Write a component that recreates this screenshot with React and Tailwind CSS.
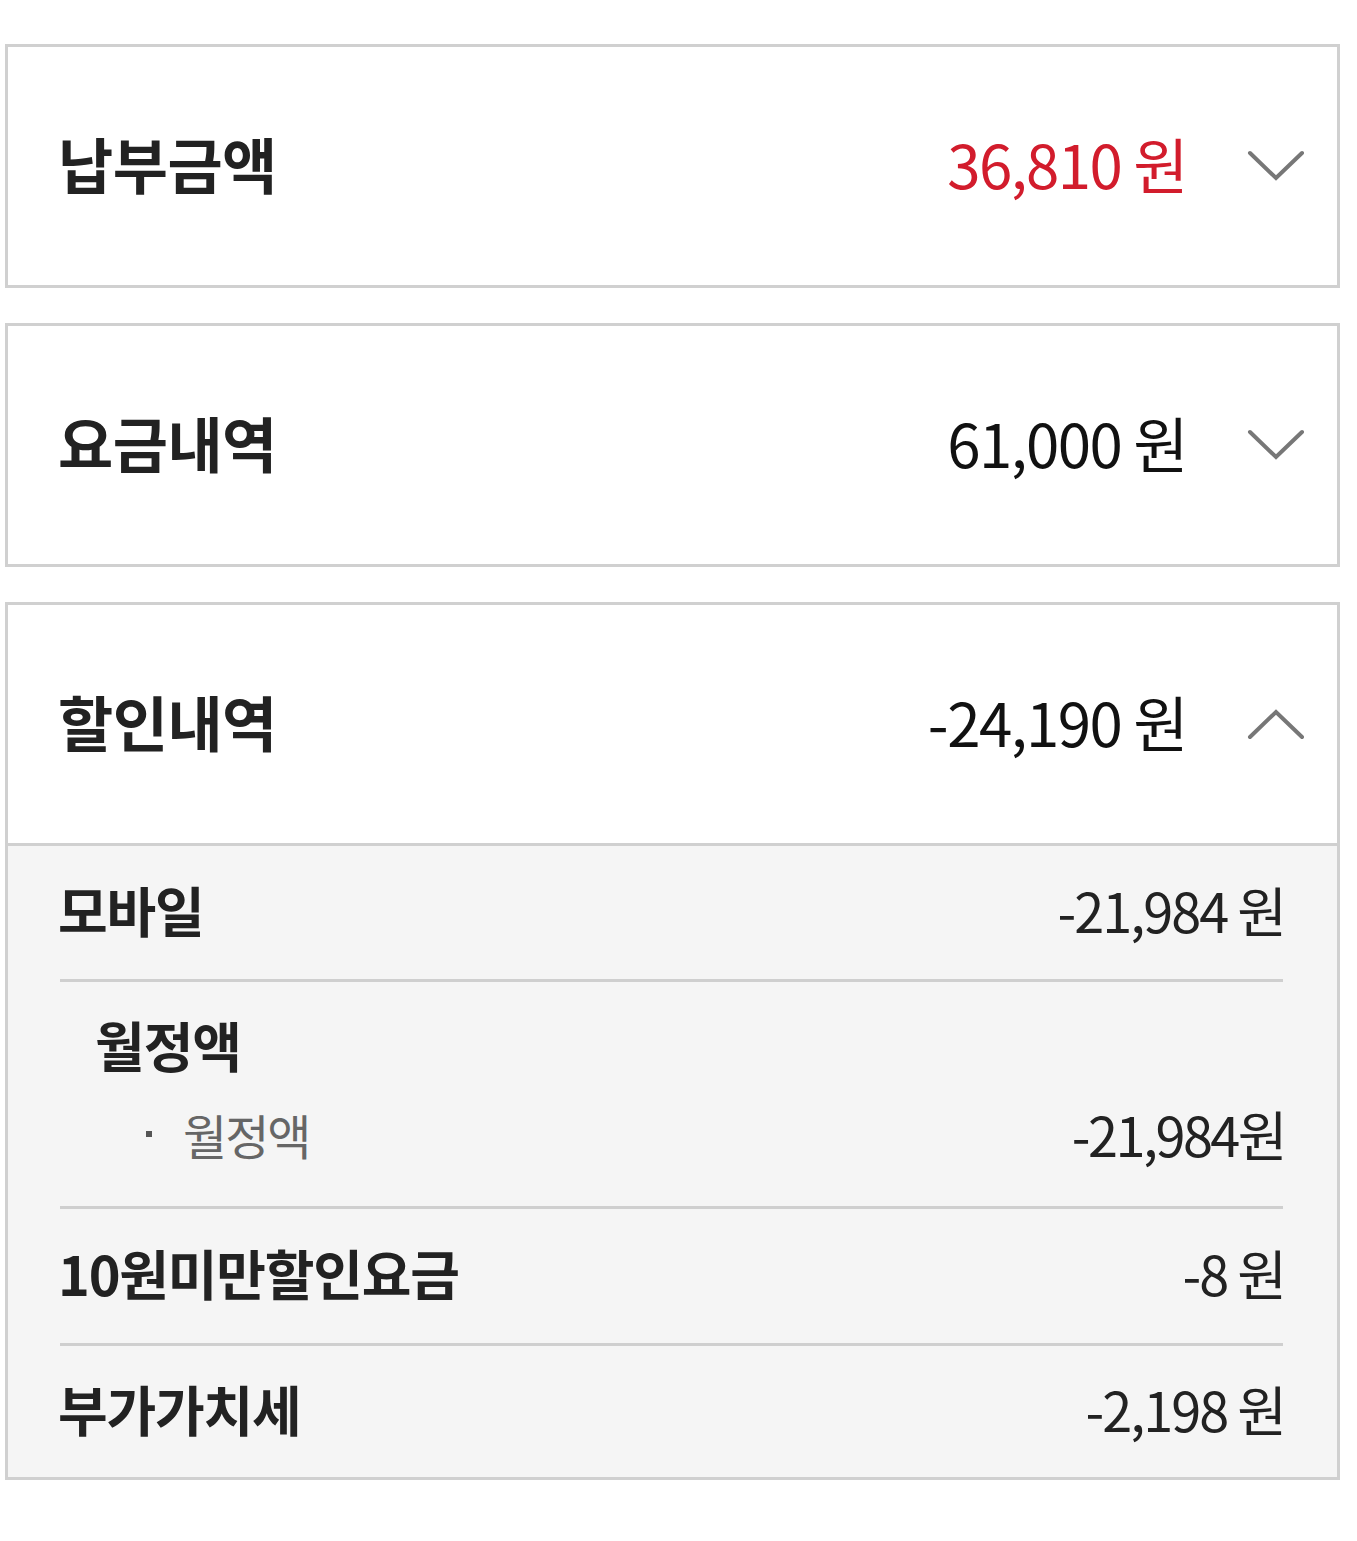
import React from "react";

const FONT = { fontFamily: '"Noto Sans CJK KR", "Noto Sans", sans-serif' };

function Chevron({ up }) {
  return (
    <svg width="58" height="34" viewBox="0 0 58 34" className="shrink-0">
      <polyline
        points={up ? "3,30 29,5 55,30" : "3,4 29,29 55,4"}
        fill="none"
        stroke="#777"
        strokeWidth="4"
        strokeLinecap="round"
        strokeLinejoin="miter"
      />
    </svg>
  );
}

function Header({ title, value, red, up }) {
  return (
    <div className="h-[238px] flex items-center pl-[50px] pr-[32px]">
      <div className="text-[60px] font-bold text-[#222] tracking-[-0.5px] leading-none pb-[6px]">{title}</div>
      <div className="flex-1" />
      <div className={"text-[60px] leading-none tracking-[-1.5px] pb-[6px] " + (red ? "text-[#d21c2c]" : "text-[#111]")}>{value}</div>
      <div className="w-[60px]" />
      <Chevron up={up} />
    </div>
  );
}

function Row({ title, value, h }) {
  return (
    <div className={"flex items-center justify-between " + h}>
      <div className="-ml-[2px] pb-[6px] text-[54px] font-bold text-[#222] tracking-[-1.2px] leading-none">{title}</div>
      <div className="-mr-[2px] pb-[6px] text-[54px] text-[#222] tracking-[-2px] leading-none">{value}</div>
    </div>
  );
}

export default function App() {
  return (
    <div className="bg-white w-[1357px] min-h-[1541px] pt-[44px]" style={FONT}>
      <div className="ml-[5px] w-[1335px] flex flex-col gap-[35px]">
        <div className="border-[3px] border-[#d0d0d0] bg-white">
          <Header title="납부금액" value="36,810 원" red />
        </div>
        <div className="border-[3px] border-[#d0d0d0] bg-white">
          <Header title="요금내역" value="61,000 원" />
        </div>
        <div className="border-[3px] border-[#d0d0d0] bg-white">
          <Header title="할인내역" value="-24,190 원" up />
          <div className="border-t-[3px] border-[#d0d0d0] bg-[#f5f5f5] pl-[52px] pr-[54px]">
            <Row title="모바일" value="-21,984 원" h="h-[136px] border-b-[3px] border-[#cfcfcf]" />
            <div className="border-b-[3px] border-[#cfcfcf] h-[227px] flex flex-col">
              <div className="pl-[35px] pt-[36px] text-[54px] font-bold text-[#222] tracking-[-1px] leading-none">월정액</div>
              <div className="flex items-center justify-between mt-[35px]">
                <div className="flex items-center pl-[86px]">
                  <span className="w-[6px] h-[6px] bg-[#555] mr-[31px]" />
                  <span className="text-[48px] text-[#666] tracking-[-2px] leading-none">월정액</span>
                </div>
                <div className="-mr-[2px] text-[54px] text-[#222] tracking-[-2.5px] leading-none">-21,984원</div>
              </div>
            </div>
            <Row title="10원미만할인요금" value="-8 원" h="h-[137px] border-b-[3px] border-[#cfcfcf]" />
            <Row title="부가가치세" value="-2,198 원" h="h-[131px]" />
          </div>
        </div>
      </div>
    </div>
  );
}
